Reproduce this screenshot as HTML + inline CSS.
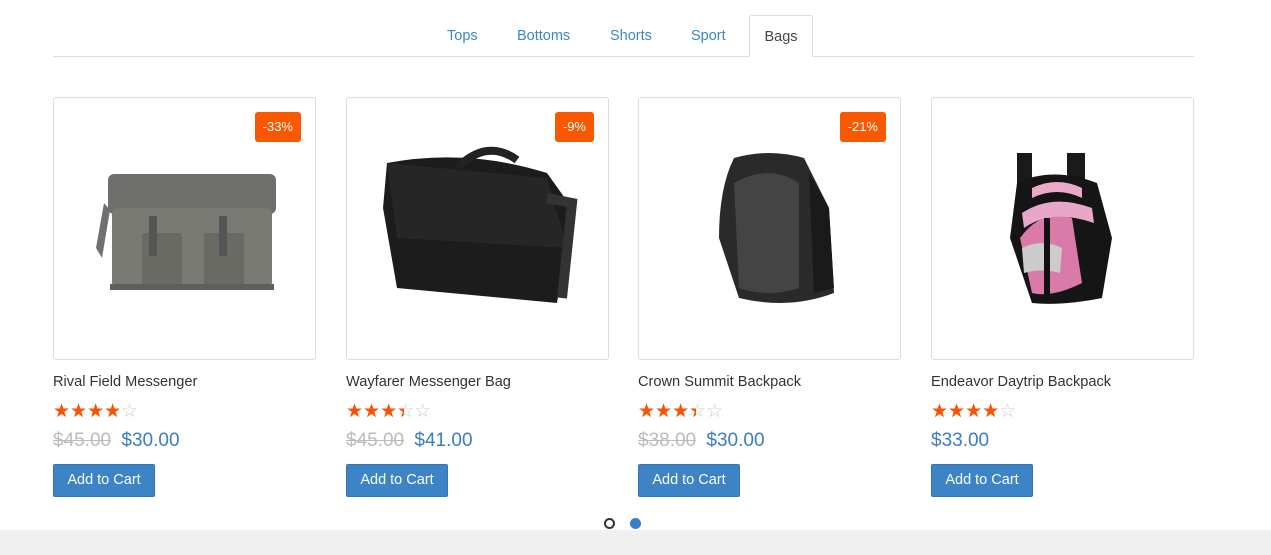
<!DOCTYPE html>
<html><head><meta charset="utf-8"><style>
*{margin:0;padding:0;box-sizing:border-box}
body{width:1271px;height:555px;background:#fff;font-family:"Liberation Sans",sans-serif;position:relative;overflow:hidden}
.foot{position:absolute;left:0;top:530px;width:1271px;height:25px;background:#f0f0f0}
.tabline{position:absolute;left:53px;top:56px;width:1141px;height:1px;background:#ddd}
.tab{position:absolute;top:28px;font-size:14.5px;color:#3a87c8}
.bagtab{position:absolute;left:749px;top:15px;width:64px;height:42px;border:1px solid #ddd;border-bottom:1px solid #fff;border-radius:3px 3px 0 0;background:#fff;color:#444;font-size:14.5px;text-align:center;padding-top:13px}
.card{position:absolute;top:97px;width:263px;height:263px;border:1px solid #ddd;border-radius:3px}
.badge{position:absolute;top:14px;right:14px;height:30px;background:#f95700;color:#fff;font-size:13px;line-height:30px;padding:0 8px;border-radius:3px}
.card svg{position:absolute;left:0;top:0}
.name{position:absolute;top:374px;font-size:14.6px;color:#333}
.stars{position:absolute;top:401px;font-size:19px;color:#ccc;line-height:22px}
.stars .on{position:absolute;left:0;top:0;overflow:hidden;white-space:nowrap;color:#f75300}
.price{position:absolute;top:430px;font-size:19px;color:#3a7dc0}
.price s{color:#bbb;margin-right:5px}
.btn{position:absolute;top:464px;width:102px;height:33px;background:#3c84c6;border:1px solid #3476b3;border-radius:2px;color:#fff;font-size:14.5px;text-align:center;line-height:31px}
.dot{position:absolute;top:518px;width:11px;height:11px;border-radius:50%}
</style></head><body>
<div class="tabline"></div>
<div class="tab" style="left:447px">Tops</div>
<div class="tab" style="left:517px">Bottoms</div>
<div class="tab" style="left:610px">Shorts</div>
<div class="tab" style="left:691px">Sport</div>
<div class="bagtab">Bags</div>

<div class="card" style="left:53px"><div class="badge">-33%</div>
<svg width="263" height="263"><path d="M50 105 L42 150 L48 160 L56 112Z" fill="#707070"/>
<rect x="54" y="76" width="168" height="40" rx="6" fill="#6e6e6a"/>
<rect x="58" y="110" width="160" height="80" rx="6" fill="#7a7a75"/>
<rect x="88" y="135" width="40" height="55" rx="3" fill="#6a6a65"/><rect x="150" y="135" width="40" height="55" rx="3" fill="#6a6a65"/>
<rect x="95" y="118" width="8" height="40" fill="#555"/><rect x="165" y="118" width="8" height="40" fill="#555"/>
<rect x="56" y="186" width="164" height="6" fill="#5e5e5a"/></svg></div>
<div class="card" style="left:346px"><div class="badge">-9%</div>
<svg width="263" height="263"><path d="M40 65 Q120 50 200 75 L225 110 L210 205 L50 190 L36 110Z" fill="#1c1c1c"/>
<path d="M110 70 Q140 40 170 62" stroke="#222" stroke-width="8" fill="none"/>
<path d="M40 65 L200 80 L220 150 L50 140Z" fill="#262626"/>
<path d="M200 100 L225 105 L215 200" stroke="#333" stroke-width="10" fill="none"/></svg></div>
<div class="card" style="left:638px"><div class="badge">-21%</div>
<svg width="263" height="263"><path d="M95 60 Q130 50 165 60 L190 110 L195 195 Q150 212 100 200 L80 140 Q80 90 95 60Z" fill="#2a2a2a"/>
<path d="M95 85 Q130 65 160 85 L160 190 Q130 200 100 190Z" fill="#444"/>
<path d="M170 75 L190 110 L195 190 L175 195Z" fill="#1a1a1a"/></svg></div>
<div class="card" style="left:931px">
<svg width="263" height="263"><rect x="85" y="55" width="15" height="35" fill="#1a1a1a"/><rect x="135" y="55" width="18" height="35" fill="#1a1a1a"/>
<path d="M85 85 Q120 68 165 85 L180 140 L170 200 Q130 208 100 205 L78 140Z" fill="#151515"/>
<path d="M88 140 Q110 110 140 120 L150 185 Q120 200 100 195Z" fill="#d97aa8"/>
<path d="M90 115 Q120 95 160 110 L162 125 Q120 110 92 130Z" fill="#e8a6c8"/>
<path d="M100 90 Q125 78 150 90 L150 100 Q125 88 100 100Z" fill="#e9a9c9"/>
<path d="M90 150 Q110 140 130 150 L128 175 Q110 170 92 175Z" fill="#ccc"/>
<rect x="112" y="120" width="6" height="80" fill="#111"/></svg></div>

<div class="name" style="left:53px">Rival Field Messenger</div>
<div class="name" style="left:346px">Wayfarer Messenger Bag</div>
<div class="name" style="left:638px">Crown Summit Backpack</div>
<div class="name" style="left:931px">Endeavor Daytrip Backpack</div>

<div class="stars" style="left:53px">☆☆☆☆☆<span class="on" style="width:66px">★★★★★</span></div>
<div class="stars" style="left:346px">☆☆☆☆☆<span class="on" style="width:58px">★★★★★</span></div>
<div class="stars" style="left:638px">☆☆☆☆☆<span class="on" style="width:58px">★★★★★</span></div>
<div class="stars" style="left:931px">☆☆☆☆☆<span class="on" style="width:67px">★★★★</span></div>

<div class="price" style="left:53px"><s>$45.00</s> $30.00</div>
<div class="price" style="left:346px"><s>$45.00</s> $41.00</div>
<div class="price" style="left:638px"><s>$38.00</s> $30.00</div>
<div class="price" style="left:931px">$33.00</div>

<div class="btn" style="left:53px">Add to Cart</div>
<div class="btn" style="left:346px">Add to Cart</div>
<div class="btn" style="left:638px">Add to Cart</div>
<div class="btn" style="left:931px">Add to Cart</div>

<div class="dot" style="left:604px;border:2px solid #333"></div>
<div class="dot" style="left:630px;background:#3a7dc0"></div>
<div class="foot"></div>
</body></html>
